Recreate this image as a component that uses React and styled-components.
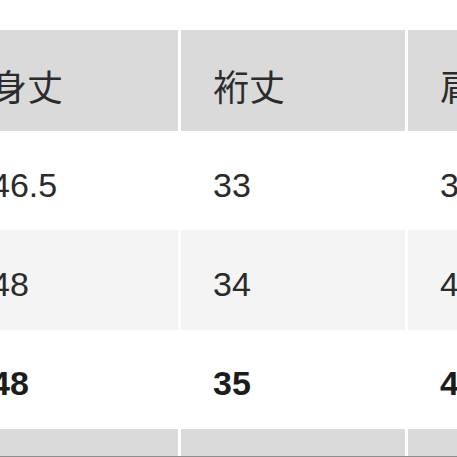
import React from 'react'
import styled, { createGlobalStyle } from 'styled-components'

const GlobalStyle = createGlobalStyle`
  html, body {
    margin: 0;
    padding: 0;
    background: #ffffff;
    overflow: hidden;
  }
  body {
    font-family: "Liberation Sans", "Noto Sans CJK JP", sans-serif;
    color: #2b2b2b;
  }
`

// the table is wider than the window, first column starts off screen
const Wrapper = styled.div`
  padding-top: 30px;
  margin-left: -41px;
  width: 673px;
`

const Row = styled.div`
  display: grid;
  grid-template-columns: 219px 224px 224px;
  column-gap: 3px;
  height: ${p => p.$height || '99.33px'};
  border-bottom: ${p => (p.$line ? '1px solid #8c8c8c' : 'none')};
`

const Cell = styled.div`
  display: flex;
  align-items: center;
  padding: 9px 0 0 32px;
  background: ${p => p.$bg || '#ffffff'};
  font-size: ${p => (p.$head ? '36px' : '34px')};
  font-weight: ${p => (p.$bold ? 700 : 400)};
  font-family: ${p =>
    p.$head
      ? '"Noto Sans CJK JP", "Liberation Sans", sans-serif'
      : '"Liberation Sans", "Noto Sans CJK JP", sans-serif'};
  color: ${p => (p.$bold ? '#1c1c1c' : '#2b2b2b')};
  white-space: nowrap;
  overflow: hidden;
`

const HEAD_BG = '#dadada'
const LIGHT_BG = '#f4f4f4'

const headers = ['身丈', '裄丈', '肩幅']
const rows = [
  { values: ['46.5', '33', '39'], bg: '#ffffff' },
  { values: ['48', '34', '41'], bg: LIGHT_BG },
  { values: ['48', '35', '42'], bg: '#ffffff', bold: true },
]

export default function App() {
  return (
    <>
      <GlobalStyle />
      <Wrapper>
        <Row $height="101px">
          {headers.map(h => (
            <Cell key={h} $head $bg={HEAD_BG}>{h}</Cell>
          ))}
        </Row>
        {rows.map((r, i) => (
          <Row key={i}>
            {r.values.map((v, j) => (
              <Cell key={j} $bg={r.bg} $bold={r.bold}>{v}</Cell>
            ))}
          </Row>
        ))}
        <Row $height="27px" $line>
          <Cell $bg={HEAD_BG} />
          <Cell $bg={HEAD_BG} />
          <Cell $bg={HEAD_BG} />
        </Row>
      </Wrapper>
    </>
  )
}
